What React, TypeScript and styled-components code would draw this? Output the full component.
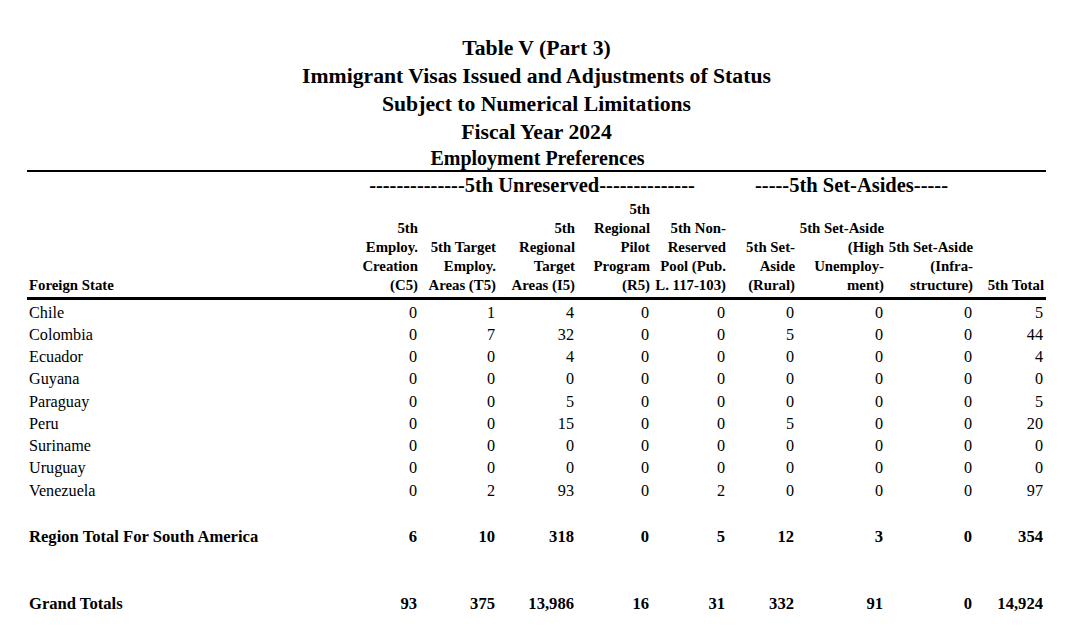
import React from "react";
import styled, { createGlobalStyle } from "styled-components";

const Global = createGlobalStyle`
  html, body { margin: 0; padding: 0; background: #fff; }
  body { font-family: "Liberation Serif", "Times New Roman", serif; color: #000; }
`;

const COLS = "333px 60px 78px 79px 75px 76px 69px 89px 89px 71px";

const Page = styled.div`
  width: 1019px;
  padding: 34px 0 0 27px;
`;

const TitleBlock = styled.div`
  text-align: center;
  font-weight: bold;
  border-bottom: 2px solid #000;
`;

const TitleLine = styled.div`
  font-size: 21.7px;
  line-height: 28px;
`;

const SubTitle = styled.div`
  font-size: 20px;
  line-height: 24px;
  padding-left: 2px;
`;

const GroupRow = styled.div`
  display: grid;
  grid-template-columns: ${COLS};
  height: 26px;
  align-items: center;
  font-weight: bold;
  font-size: 20.5px;
  white-space: nowrap;
`;

const Group = styled.div<{ $start: number; $end: number; $shift?: number }>`
  grid-column: ${(p) => p.$start} / ${(p) => p.$end};
  text-align: center;
  margin-right: ${(p) => p.$shift ?? 0}px;
`;

const HeaderRow = styled.div`
  display: grid;
  grid-template-columns: ${COLS};
  padding: 1.5px 0 2.5px;
  border-bottom: 3px solid #000;
  font-weight: bold;
  font-size: 14.8px;
  line-height: 19px;
  align-items: end;
`;

const HeadCell = styled.div<{ $left?: boolean }>`
  text-align: ${(p) => (p.$left ? "left" : "right")};
  padding: ${(p) => (p.$left ? "0 0 0 2px" : "0 2px 0 0")};
  white-space: nowrap;
`;

const Body = styled.div`
  padding-top: 2px;
`;

const Row = styled.div<{ $bold?: boolean; $gap?: number }>`
  display: grid;
  grid-template-columns: ${COLS};
  height: 22.25px;
  align-items: center;
  font-size: ${(p) => (p.$bold ? "16.6px" : "16.2px")};
  font-weight: ${(p) => (p.$bold ? "bold" : "normal")};
  margin-top: ${(p) => p.$gap ?? 0}px;
`;

const Cell = styled.div<{ $left?: boolean }>`
  text-align: ${(p) => (p.$left ? "left" : "right")};
  padding: ${(p) => (p.$left ? "0 0 0 2px" : "0 3px 0 0")};
  white-space: nowrap;
`;

const headers: string[][] = [
  ["Foreign State"],
  ["5th", "Employ.", "Creation", "(C5)"],
  ["5th Target", "Employ.", "Areas (T5)"],
  ["5th", "Regional", "Target", "Areas (I5)"],
  ["5th", "Regional", "Pilot", "Program", "(R5)"],
  ["5th Non-", "Reserved", "Pool (Pub.", "L. 117-103)"],
  ["5th Set-", "Aside", "(Rural)"],
  ["5th Set-Aside", "(High", "Unemploy-", "ment)"],
  ["5th Set-Aside", "(Infra-", "structure)"],
  ["5th Total"],
];

const rows: (string | number)[][] = [
  ["Chile", 0, 1, 4, 0, 0, 0, 0, 0, 5],
  ["Colombia", 0, 7, 32, 0, 0, 5, 0, 0, 44],
  ["Ecuador", 0, 0, 4, 0, 0, 0, 0, 0, 4],
  ["Guyana", 0, 0, 0, 0, 0, 0, 0, 0, 0],
  ["Paraguay", 0, 0, 5, 0, 0, 0, 0, 0, 5],
  ["Peru", 0, 0, 15, 0, 0, 5, 0, 0, 20],
  ["Suriname", 0, 0, 0, 0, 0, 0, 0, 0, 0],
  ["Uruguay", 0, 0, 0, 0, 0, 0, 0, 0, 0],
  ["Venezuela", 0, 2, 93, 0, 2, 0, 0, 0, 97],
];

const regionTotal = ["Region Total For South America", "6", "10", "318", "0", "5", "12", "3", "0", "354"];
const grandTotal = ["Grand Totals", "93", "375", "13,986", "16", "31", "332", "91", "0", "14,924"];

export default function App() {
  return (
    <Page>
      <Global />
      <TitleBlock>
        <TitleLine>Table V (Part 3)</TitleLine>
        <TitleLine>Immigrant Visas Issued and Adjustments of Status</TitleLine>
        <TitleLine>Subject to Numerical Limitations</TitleLine>
        <TitleLine>Fiscal Year 2024</TitleLine>
        <SubTitle>Employment Preferences</SubTitle>
      </TitleBlock>
      <GroupRow>
        <Group $start={2} $end={7} $shift={24}>
          --------------5th Unreserved--------------
        </Group>
        <Group $start={7} $end={10}>
          -----5th Set-Asides-----
        </Group>
      </GroupRow>
      <HeaderRow>
        {headers.map((lines, i) => (
          <HeadCell key={i} $left={i === 0}>
            {lines.map((l, j) => (
              <div key={j}>{l}</div>
            ))}
          </HeadCell>
        ))}
      </HeaderRow>
      <Body>
        {rows.map((r, i) => (
          <Row key={i}>
            {r.map((v, j) => (
              <Cell key={j} $left={j === 0}>
                {v}
              </Cell>
            ))}
          </Row>
        ))}
        <Row $bold $gap={23.75}>
          {regionTotal.map((v, j) => (
            <Cell key={j} $left={j === 0}>
              {v}
            </Cell>
          ))}
        </Row>
        <Row $bold $gap={44.75}>
          {grandTotal.map((v, j) => (
            <Cell key={j} $left={j === 0}>
              {v}
            </Cell>
          ))}
        </Row>
      </Body>
    </Page>
  );
}
